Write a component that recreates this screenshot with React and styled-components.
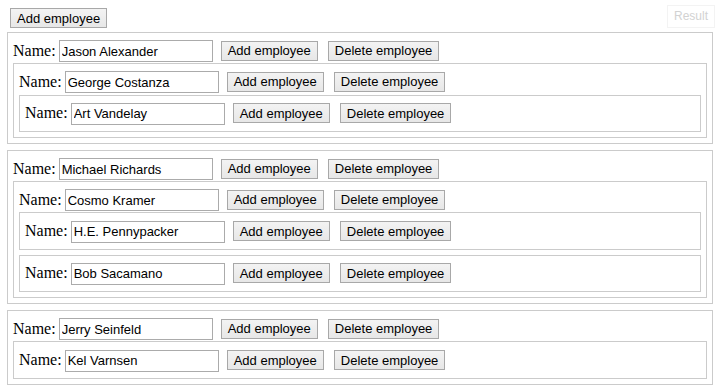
import React from "react";
import styled, { createGlobalStyle } from "styled-components";

const GlobalStyle = createGlobalStyle`
  html, body {
    margin: 0;
    padding: 0;
    background: #fff;
  }
`;

const Page = styled.div`
  position: relative;
  padding: 8px 8px 0 7px;
  font-family: "Liberation Serif", "Times New Roman", serif;
  color: #000;
`;

const ResultTag = styled.div`
  position: absolute;
  top: 5px;
  right: 6px;
  padding: 3px 6px 4px;
  border: 1px solid #f3f3f3;
  font: 12px "Liberation Sans", Arial, sans-serif;
  color: #d2d2d2;
`;

const Button = styled.button`
  box-sizing: border-box;
  height: 20px;
  margin: 0;
  padding: 0 6px;
  border: 1px solid #a8a8a8;
  border-radius: 0;
  background: linear-gradient(#f3f3f3, #e7e7e7);
  font: 13px "Liberation Sans", Arial, sans-serif;
  color: #000;
  white-space: nowrap;
  margin-left: ${(p) => p.$gap || 0}px;
`;

const TopBar = styled.div`
  display: flex;
  padding-left: 3px;
  margin-bottom: 4px;
`;

const List = styled.div`
  display: flex;
  flex-direction: column;
  gap: ${(p) => p.$gap}px;
`;

const Card = styled.div`
  border: 1px solid #cbcbcb;
  padding: 5px;
`;

const Row = styled.div`
  display: flex;
  align-items: center;
  height: 25.3px;
`;

const Label = styled.span`
  font-size: 16px;
  margin-right: 3px;
`;

const NameInput = styled.input`
  box-sizing: border-box;
  width: 154px;
  height: 22px;
  margin: 1px 0 0;
  padding: 0 2px;
  border: 1px solid #ababab;
  font: 13px "Liberation Sans", Arial, sans-serif;
  color: #000;
  outline: none;
`;

const staff = [
  {
    name: "Jason Alexander",
    employees: [
      {
        name: "George Costanza",
        employees: [{ name: "Art Vandelay", employees: [] }],
      },
    ],
  },
  {
    name: "Michael Richards",
    employees: [
      {
        name: "Cosmo Kramer",
        employees: [
          { name: "H.E. Pennypacker", employees: [] },
          { name: "Bob Sacamano", employees: [] },
        ],
      },
    ],
  },
  {
    name: "Jerry Seinfeld",
    employees: [{ name: "Kel Varnsen", employees: [] }],
  },
];

const Employee = ({ person }) => (
  <Card>
    <Row>
      <Label>Name:</Label>
      <NameInput defaultValue={person.name} />
      <Button $gap={8}>Add employee</Button>
      <Button $gap={10}>Delete employee</Button>
    </Row>
    {person.employees.length > 0 && (
      <List $gap={5}>
        {person.employees.map((e) => (
          <Employee key={e.name} person={e} />
        ))}
      </List>
    )}
  </Card>
);

export default function App() {
  return (
    <Page>
      <GlobalStyle />
      <ResultTag>Result</ResultTag>
      <TopBar>
        <Button>Add employee</Button>
      </TopBar>
      <List $gap={6}>
        {staff.map((p) => (
          <Employee key={p.name} person={p} />
        ))}
      </List>
    </Page>
  );
}
